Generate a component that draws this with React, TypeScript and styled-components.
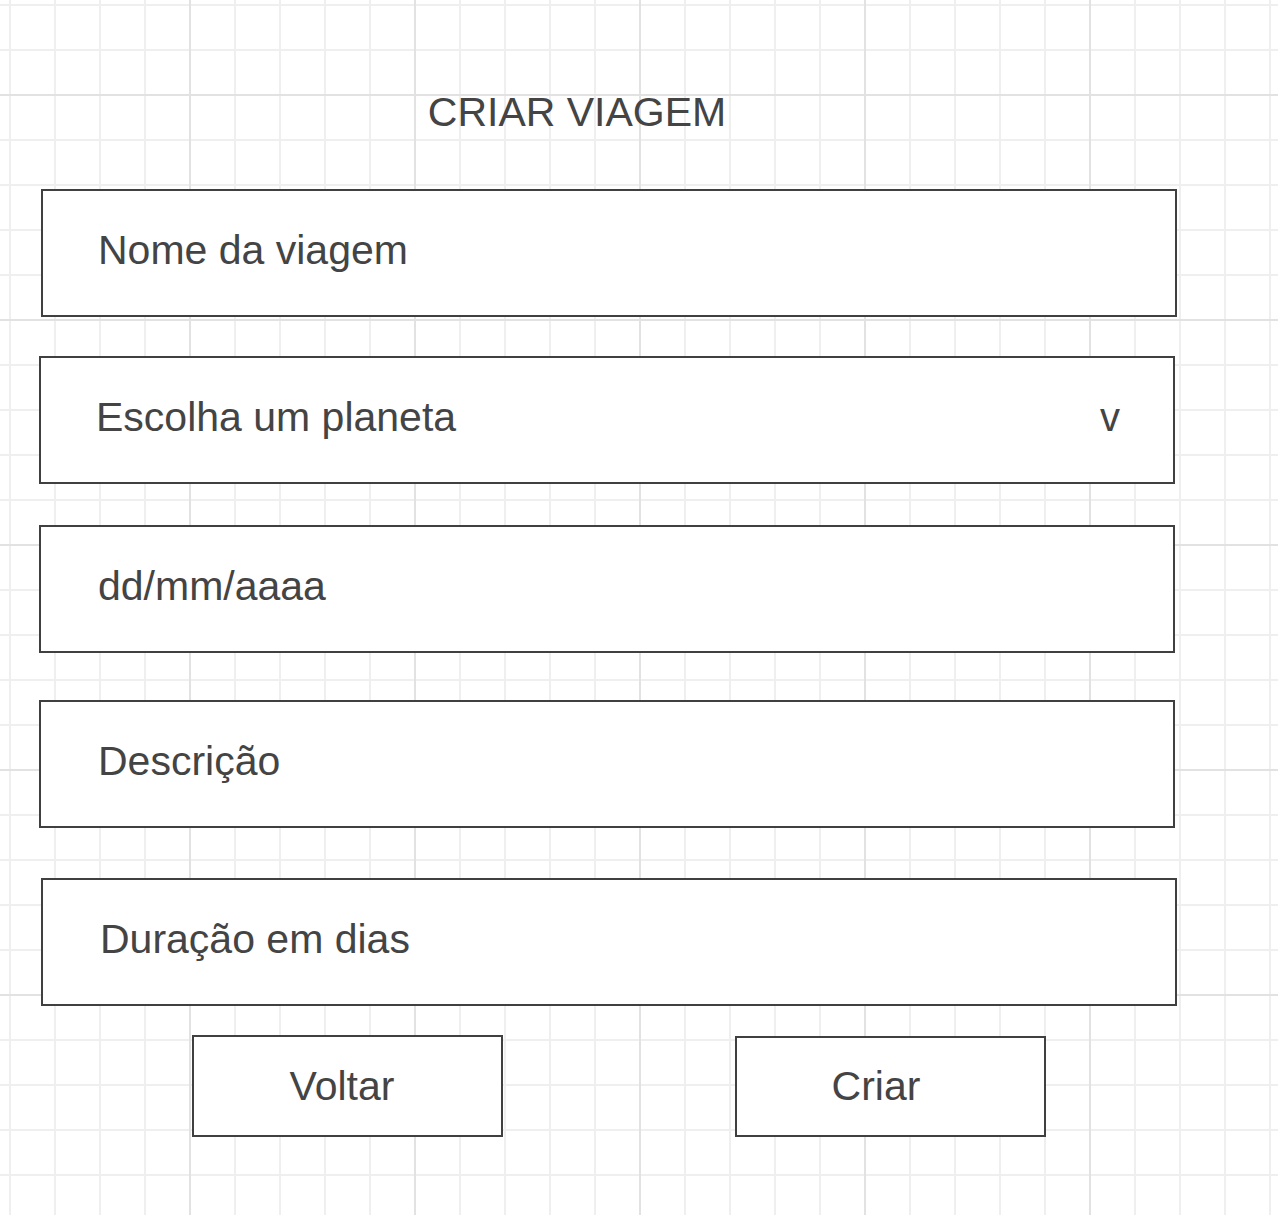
import React from "react";
import styled, { createGlobalStyle } from "styled-components";

const GlobalStyle = createGlobalStyle`
  html, body {
    margin: 0;
    padding: 0;
  }
  body {
    font-family: "Liberation Sans", Arial, sans-serif;
    color: #444;
  }
`;

const Page = styled.div`
  min-height: 1215px;
  background-color: #fff;
  background-image:
    linear-gradient(to right, #e2e2e2 2px, transparent 2px),
    linear-gradient(to bottom, #e2e2e2 2px, transparent 2px),
    linear-gradient(to right, #efefef 2px, transparent 2px),
    linear-gradient(to bottom, #efefef 2px, transparent 2px);
  background-size: 225px 100%, 100% 225px, 45px 100%, 100% 45px;
  background-position: 189px 0, 0 94px, 9px 0, 0 4px;
  padding-top: 92px;
  box-sizing: border-box;
`;

const Form = styled.div`
  width: 1136px;
  margin-left: 41px;
  display: flex;
  flex-direction: column;
  align-items: flex-start;
`;

const Title = styled.h1`
  align-self: stretch;
  margin: 0;
  padding-right: 64px;
  text-align: center;
  font-size: 41px;
  line-height: 41px;
  font-weight: 400;
  color: #444;
`;

const Field = styled.div<{ $top: number; $dx?: number; $pad: number }>`
  box-sizing: border-box;
  width: 1136px;
  height: 128px;
  margin-top: ${(p) => p.$top}px;
  margin-left: ${(p) => p.$dx ?? 0}px;
  padding: 0 53px 6px ${(p) => p.$pad}px;
  border: 2px solid #404040;
  background: #fff;
  display: flex;
  align-items: center;
  justify-content: space-between;
  font-size: 41px;
  line-height: 41px;
  color: #444;
`;

const Chevron = styled.span`
  font-size: 40px;
`;

const Actions = styled.div`
  display: flex;
  align-items: flex-start;
  gap: 232px;
  margin-top: 29px;
  padding-left: 151px;
`;

const Button = styled.button<{ $shift: number; $dy?: number }>`
  box-sizing: border-box;
  width: 311px;
  height: ${(p) => 102 - (p.$dy ?? 0)}px;
  margin-top: ${(p) => p.$dy ?? 0}px;
  padding: 0 ${(p) => p.$shift}px 0 0;
  border: 2px solid #404040;
  background: #fff;
  font-family: "Liberation Sans", Arial, sans-serif;
  font-size: 41px;
  line-height: 41px;
  color: #444;
  display: flex;
  align-items: center;
  justify-content: center;
`;

export default function App() {
  return (
    <>
      <GlobalStyle />
      <Page>
        <Form>
          <Title>CRIAR VIAGEM</Title>
          <Field $top={56} $pad={55}>Nome da viagem</Field>
          <Field $top={39} $dx={-2} $pad={55}>
            Escolha um planeta
            <Chevron>v</Chevron>
          </Field>
          <Field $top={41} $dx={-2} $pad={57}>dd/mm/aaaa</Field>
          <Field $top={47} $dx={-2} $pad={57}>Descrição</Field>
          <Field $top={50} $pad={57}>Duração em dias</Field>
          <Actions>
            <Button $shift={11}>Voltar</Button>
            <Button $shift={29} $dy={1}>Criar</Button>
          </Actions>
        </Form>
      </Page>
    </>
  );
}
